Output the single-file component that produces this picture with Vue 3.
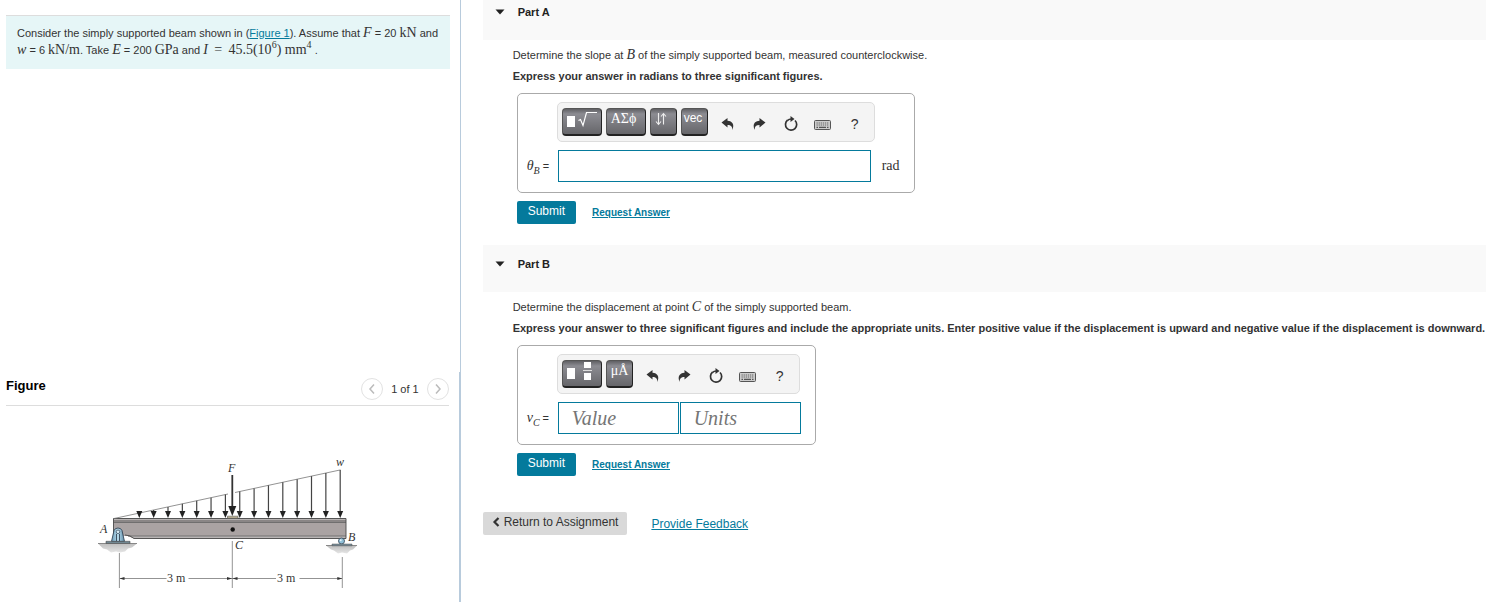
<script setup>
import { ref } from "vue";

const parts = ref([
  {
    id: "a",
    title: "Part A",
    open: true,
    prompt: ["Determine the slope at ", "B", " of the simply supported beam, measured counterclockwise."],
    instruction: "Express your answer in radians to three significant figures.",
    symbol: "θ",
    sub: "B",
    keys: ["root", "greek", "arrows", "vec"],
    fields: [{ name: "Answer", placeholder: "", wide: true, value: "" }],
    unit: "rad",
  },
  {
    id: "b",
    title: "Part B",
    open: true,
    prompt: ["Determine the displacement at point ", "C", " of the simply supported beam."],
    instruction:
      "Express your answer to three significant figures and include the appropriate units. Enter positive value if the displacement is upward and negative value if the displacement is downward.",
    symbol: "v",
    sub: "C",
    keys: ["fraction", "units"],
    fields: [
      { name: "Value", placeholder: "Value", value: "" },
      { name: "Units", placeholder: "Units", value: "" },
    ],
    unit: "",
  },
]);

const keyLabels = {
  root: "Templates",
  greek: "Symbols",
  arrows: "Sub and superscripts",
  vec: "Vectors",
  fraction: "Templates",
  units: "Units",
};

const tools = ["undo", "redo", "reset", "keyboard", "help"];

// distributed load arrows: x position and y of the sloped line above it
const loads = Array.from({ length: 15 }, (_, i) => {
  const x = 139.3 + i * 14.35;
  return { x, y: 518.5 - (x - 114) * 0.2146 };
});

const clearPart = (part, tool) => {
  if (tool === "reset") {
    part.fields.forEach((field) => (field.value = ""));
  }
};
</script>

<template>
  <div class="page">
    <aside class="side">
      <section class="problem-pane">
        <p class="problem">
          Consider the simply supported beam shown in (<a href="#figure">Figure 1</a>). Assume that
          <i class="math">F</i> = 20 <span class="math">kN</span> and
          <i class="math">w</i> = 6 <span class="math">kN/m</span>. Take <i class="math">E</i> = 200
          <span class="math">GPa</span> and
          <span class="math"><i>I</i>&thinsp; = &thinsp;45.5(10<sup>6</sup>) mm<sup>4</sup></span> .
        </p>
      </section>

      <section id="figure" class="figure-pane">
        <header class="figure-head">
          <h2>Figure</h2>
          <nav class="pager">
            <button type="button" aria-label="Previous figure">
              <svg width="8" height="12" viewBox="0 0 8 12"><path d="M6 1.5 2 6l4 4.5" /></svg>
            </button>
            <span>1 of 1</span>
            <button type="button" aria-label="Next figure">
              <svg width="8" height="12" viewBox="0 0 8 12"><path d="M2 1.5 6 6l-4 4.5" /></svg>
            </button>
          </nav>
        </header>

        <svg class="beam" width="270" height="140" viewBox="94 455 270 140" role="img" aria-label="Simply supported beam">
          <defs>
            <linearGradient id="steel" x1="0" x2="1">
              <stop offset="0" stop-color="#6d9dba" />
              <stop offset="0.5" stop-color="#b9dcec" />
              <stop offset="1" stop-color="#5d8ba7" />
            </linearGradient>
            <linearGradient id="ground" x1="0" x2="0" y1="0" y2="1">
              <stop offset="0" stop-color="#bdbdbd" />
              <stop offset="1" stop-color="#e6e6e6" />
            </linearGradient>
          </defs>

          <!-- ground -->
          <path d="M98 543.5h39l-5 4-4 1-3 3-5 1-4-1-5 1-4-3-4-1z" fill="url(#ground)" />
          <path d="M326 545.5h31l-4 4-3 1-3 3-5-1-4 1-4-3-3-1z" fill="url(#ground)" />
          <path d="M98 543.5h39M326 545.5h31" stroke="#888" />

          <!-- beam -->
          <path d="M113.5 518.5H346v20H134l-6-2.5h-14.5z" fill="#aaa3a3" />
          <path d="M113.5 518.5H346v4H113.5z" fill="#8a8686" />
          <path d="M113.5 519.5H346" stroke="#b8b4b4" />
          <path d="M134 538.5l-6-2.5H346v2.5z" fill="#bab6b6" />
          <path d="M128 536H346M113.5 522.5H346" stroke="#666" stroke-width="0.8" />
          <path d="M125 535q5 0 9 3.5h212v-20H113.5V541" fill="none" stroke="#4a4a4a" stroke-width="0.9" />

          <!-- load -->
          <path d="M114 518.5 228 494M235 492.5 340.5 469.9" stroke="#777" stroke-width="0.8" />
          <g v-for="load in loads" :key="load.x">
            <path :d="`M${load.x} ${load.y}V513`" stroke="#444" stroke-width="1.2" />
            <path :d="`M${load.x} 518l-3 -7h6z`" fill="#222" />
          </g>
          <path d="M227.5 516.2h10.5v2h-10.5z" fill="#c8bd9c" stroke="#555" stroke-width="0.6" />
          <path d="M232.3 475V508" stroke="#333" stroke-width="1.8" />
          <path d="M232.3 516l-4-10h8z" fill="#222" />
          <circle cx="232.7" cy="529.5" r="2.2" fill="#111" />

          <!-- supports -->
          <path d="M111.5 541.5l2.5-11q1-2.5 4-2.5t4 2.5l2.5 11z" fill="url(#steel)" stroke="#345" stroke-width="0.9" />
          <circle cx="118" cy="531.8" r="1.8" fill="#d9edf6" stroke="#345" stroke-width="0.7" />
          <path d="M116.5 541v-7M119.5 541v-7" stroke="#345" stroke-width="0.9" />
          <path d="M106 541.3h24v2h-24z" fill="#78909c" stroke="#444" stroke-width="0.6" />
          <circle cx="341.5" cy="541" r="3" fill="#8fc0d8" stroke="#345" stroke-width="0.8" />
          <circle cx="340.7" cy="540.2" r="1" fill="#e8f6fc" />
          <path d="M332 544h20v1.8h-20z" fill="#78909c" stroke="#555" stroke-width="0.5" />

          <!-- dimensions -->
          <path
            d="M119.4 553v35M232.3 541v47M342.3 557v31M120 578.5h46.5M188.5 578.5H276M299.5 578.5H342"
            stroke="#777"
            stroke-width="0.8"
          />
          <path
            d="M119.5 578.5l5-1.6v3.2zM232 578.5l-5-1.6v3.2zM232.5 578.5l5-1.6v3.2zM342.3 578.5l-5-1.6v3.2z"
            fill="#333"
          />

          <g class="beam-text">
            <text x="100" y="533" class="it">A</text>
            <text x="348" y="541" class="it">B</text>
            <text x="235" y="549" class="it">C</text>
            <text x="228" y="472" class="it">F</text>
            <text x="336" y="466" class="it">w</text>
            <text x="167" y="582">3 m</text>
            <text x="277" y="582">3 m</text>
          </g>
        </svg>
      </section>
    </aside>

    <main class="main">
      <section v-for="part in parts" :key="part.id" class="part">
        <header class="part-head">
          <button type="button" :aria-expanded="part.open" @click="part.open = !part.open">
            <svg width="10" height="6" viewBox="0 0 10 6"><path d="M0.5 0.5h9L5 5.5z" fill="#222" /></svg>
            <span>{{ part.title }}</span>
          </button>
        </header>

        <form v-if="part.open" class="part-body" @submit.prevent>
          <p>{{ part.prompt[0] }}<i class="math">{{ part.prompt[1] }}</i>{{ part.prompt[2] }}</p>
          <p class="strong">{{ part.instruction }}</p>

          <div class="answer">
            <div class="toolbar">
              <div class="keys">
                <button
                  v-for="key in part.keys"
                  :key="key"
                  type="button"
                  class="key"
                  :class="key"
                  :aria-label="keyLabels[key]"
                >
                  <svg v-if="key === 'root'" width="36" height="24" viewBox="0 0 36 24">
                    <path d="M4 6h8v11H4z" fill="#fff" />
                    <path d="M15.5 10.5l2-1 2.5 6L23.5 2.5H34" fill="none" stroke="#fff" stroke-width="1.2" />
                  </svg>
                  <svg v-else-if="key === 'fraction'" width="36" height="24" viewBox="0 0 36 24">
                    <path d="M4 6h8v11H4zM21 0h7v6h-7zM21 11h7v7h-7z" fill="#fff" />
                    <path d="M20 8.5h9" stroke="#ddd" />
                  </svg>
                  <svg v-else-if="key === 'arrows'" width="22" height="24" viewBox="0 0 22 24">
                    <path
                      d="M7.5 3v11M5 11.5l2.5 3 2.5-3M12.5 14.5V3.5M10 6.5l2.5-3 2.5 3"
                      fill="none"
                      stroke="#eee"
                      stroke-width="1.1"
                    />
                  </svg>
                  <span v-else-if="key === 'greek'">ΑΣϕ</span>
                  <span v-else-if="key === 'units'">μÅ</span>
                  <span v-else>vec</span>
                </button>
              </div>

              <button
                v-for="tool in tools"
                :key="tool"
                type="button"
                class="tool"
                :aria-label="tool"
                @click="clearPart(part, tool)"
              >
                <svg v-if="tool === 'undo'" width="16" height="16" viewBox="0 0 16 16">
                  <path d="M2.5 6.5 8.5 2V4.8c5 .2 7.3 4 4.8 9.2.2-3.6-1.3-5.1-4.8-5.1V11.5z" fill="#333" />
                </svg>
                <svg v-else-if="tool === 'redo'" width="16" height="16" viewBox="0 0 16 16">
                  <path d="M14.5 6.5 8.5 2V4.8c-5 .2-7.3 4-4.8 9.2-.2-3.6 1.3-5.1 4.8-5.1V11.5z" fill="#333" />
                </svg>
                <svg v-else-if="tool === 'reset'" width="16" height="16" viewBox="0 0 16 16">
                  <path d="M4.5 4.2A5.6 5.6 0 1 0 12 4.5" fill="none" stroke="#333" stroke-width="1.7" />
                  <path d="M4.3 4.6Q6 3 8.5 3" fill="none" stroke="#333" stroke-width="1.5" />
                  <path d="M7.5 0 11.5 3 7.5 6z" fill="#333" />
                </svg>
                <svg v-else-if="tool === 'keyboard'" width="18" height="16" viewBox="0 0 18 16">
                  <rect x="0.5" y="4.5" width="16" height="9" rx="1" fill="#ccc" stroke="#555" />
                  <path d="M2.5 7h12M2.5 9h12" stroke="#666" stroke-width="1.2" stroke-dasharray="1.3 0.8" />
                  <path d="M2.5 11.4H4M5 11.4h7M13 11.4h1.5" stroke="#555" stroke-width="1.2" />
                </svg>
                <span v-else>?</span>
              </button>
            </div>

            <div class="entry">
              <label :for="`${part.id}-0`"><i class="math">{{ part.symbol }}<sub>{{ part.sub }}</sub></i> =</label>
              <input
                v-for="(field, i) in part.fields"
                :id="`${part.id}-${i}`"
                :key="field.name"
                v-model="field.value"
                type="text"
                :class="{ wide: field.wide }"
                :placeholder="field.placeholder"
                :aria-label="field.name"
              />
              <span v-if="part.unit" class="math unit">{{ part.unit }}</span>
            </div>
          </div>

          <div class="actions">
            <button type="submit" class="submit">Submit</button>
            <a href="#">Request Answer</a>
          </div>
        </form>
      </section>

      <footer class="foot">
        <button type="button" class="return">
          <svg width="8" height="10" viewBox="0 0 8 10">
            <path d="M6.5 1 2.5 5l4 4" fill="none" stroke="#333" stroke-width="2.2" />
          </svg>
          Return to Assignment
        </button>
        <a href="#">Provide Feedback</a>
      </footer>
    </main>
  </div>
</template>

<style>
body {
  background: #ffffff;
}
</style>

<style scoped>
.page {
  display: grid;
  grid-template-columns: 31% minmax(0, 1fr);
  min-height: 100vh;
  font-family: "Liberation Sans", Arial, sans-serif;
  font-size: 11px;
  color: #333333;
}

p,
h2 {
  margin: 0;
}

a {
  color: #047a9c;
}

button {
  font: inherit;
  color: inherit;
  border: none;
  background: none;
  padding: 0;
  cursor: pointer;
}

.math {
  font-family: "Liberation Serif", "Times New Roman", serif;
  font-size: 14px;
  line-height: 1;
}

sup,
sub {
  font-size: 10px;
  line-height: 0;
}

.side {
  display: flex;
  flex-direction: column;
}

.problem-pane {
  flex: 1;
  padding: 15px 10px 0 6px;
  border-right: 1px solid #b8cbdc;
}

.problem {
  padding: 9px 11px 10px;
  border-top: 1px solid #dddddd;
  background: #e6f6f7;
  line-height: 17px;
}

.figure-pane {
  padding: 0 10px 7px 6px;
  border-right: 2px solid #b8cbdc;
}

.figure-head {
  display: flex;
  justify-content: space-between;
  align-items: flex-start;
  padding: 6px 0 5px;
  border-bottom: 1px solid #dddddd;
}

.figure-head h2 {
  font-size: 13px;
  line-height: 16px;
  color: #000000;
}

.pager {
  display: flex;
  align-items: center;
  gap: 8px;
}

.pager button {
  display: grid;
  place-items: center;
  width: 22px;
  height: 22px;
  border: 1px solid #e2e2e2;
  border-radius: 50%;
}

.pager path {
  fill: none;
  stroke: #bbbbbb;
  stroke-width: 1.5;
}

.beam {
  display: block;
  margin: 49px auto 0 88px;
}

.beam-text {
  font-family: "Liberation Serif", "Times New Roman", serif;
  font-size: 12px;
  fill: #333333;
}

.it {
  font-style: italic;
}

.main {
  padding-left: 22px;
}

.part-head {
  padding: 11px 12px 20px;
  background: #f9f9f9;
}

.part:first-child .part-head {
  padding-top: 4px;
}

.part-head button {
  display: flex;
  align-items: center;
  gap: 13px;
  font-size: 11px;
  line-height: 16px;
  font-weight: bold;
  color: #222222;
}

.part-body {
  padding: 5px 0 21px 30px;
}

.part-body p {
  line-height: 21px;
}

.strong {
  font-weight: bold;
}

.answer {
  width: fit-content;
  margin: 6px 0 0 4px;
  padding: 8px 14px 10px 9px;
  border: 1px solid #aaaaaa;
  border-radius: 5px;
}

.toolbar {
  display: flex;
  align-items: center;
  gap: 4px;
  width: fit-content;
  height: 38px;
  margin: 0 0 8px 30px;
  padding: 0 5px 0 4px;
  border: 1px solid #dddddd;
  border-radius: 5px;
  background: #f4f4f4;
}

.keys {
  display: flex;
  gap: 4px;
  margin-right: 1px;
}

.key {
  width: 40px;
  height: 28px;
  border: 1px solid #555555;
  border-right-color: #222222;
  border-bottom: 2px solid #222222;
  border-radius: 4px;
  background: linear-gradient(#606064, #8c8c92 20%, #66666a);
  color: #ffffff;
  text-align: left;
}

.key svg {
  display: block;
}

.key span {
  display: block;
  height: 24px;
  padding-left: 4px;
  font-family: "Liberation Serif", "Times New Roman", serif;
  font-size: 14px;
  line-height: 18px;
}

.key.arrows,
.key.vec,
.key.units {
  width: 27px;
}

.key.vec span {
  padding-left: 2px;
  font-family: "Liberation Sans", Arial, sans-serif;
  font-size: 12px;
  line-height: 16px;
}

.tool {
  display: grid;
  place-items: center;
  width: 28px;
  height: 28px;
  padding-top: 4px;
  font-size: 14px;
}

.tool svg {
  display: block;
}

.entry {
  display: flex;
  align-items: center;
  gap: 1px;
}

.entry label {
  width: 30px;
}

.entry input {
  box-sizing: border-box;
  width: 121px;
  height: 32px;
  padding: 0 13px;
  border: 1px solid #047a9c;
  background: #ffffff;
  font-family: "Liberation Serif", "Times New Roman", serif;
  font-size: 20px;
  color: #333333;
}

.entry input.wide {
  width: 313px;
}

.entry input::placeholder {
  font-style: italic;
  color: #757575;
}

.unit {
  margin-left: 10px;
}

.actions {
  display: flex;
  align-items: center;
  gap: 16px;
  margin: 8px 0 0 4px;
}

.submit {
  height: 23px;
  padding: 0 11px 3px;
  border-radius: 2px;
  background: #047a9c;
  color: #ffffff;
  font-size: 12px;
}

.actions a {
  font-size: 10px;
  font-weight: bold;
}

.foot {
  display: flex;
  align-items: center;
  gap: 24px;
  margin-top: 15px;
  font-size: 12px;
}

.return {
  display: flex;
  align-items: center;
  gap: 4px;
  height: 23px;
  padding: 0 9px 3px;
  border-radius: 2px;
  background: #d9d9d9;
}
</style>
